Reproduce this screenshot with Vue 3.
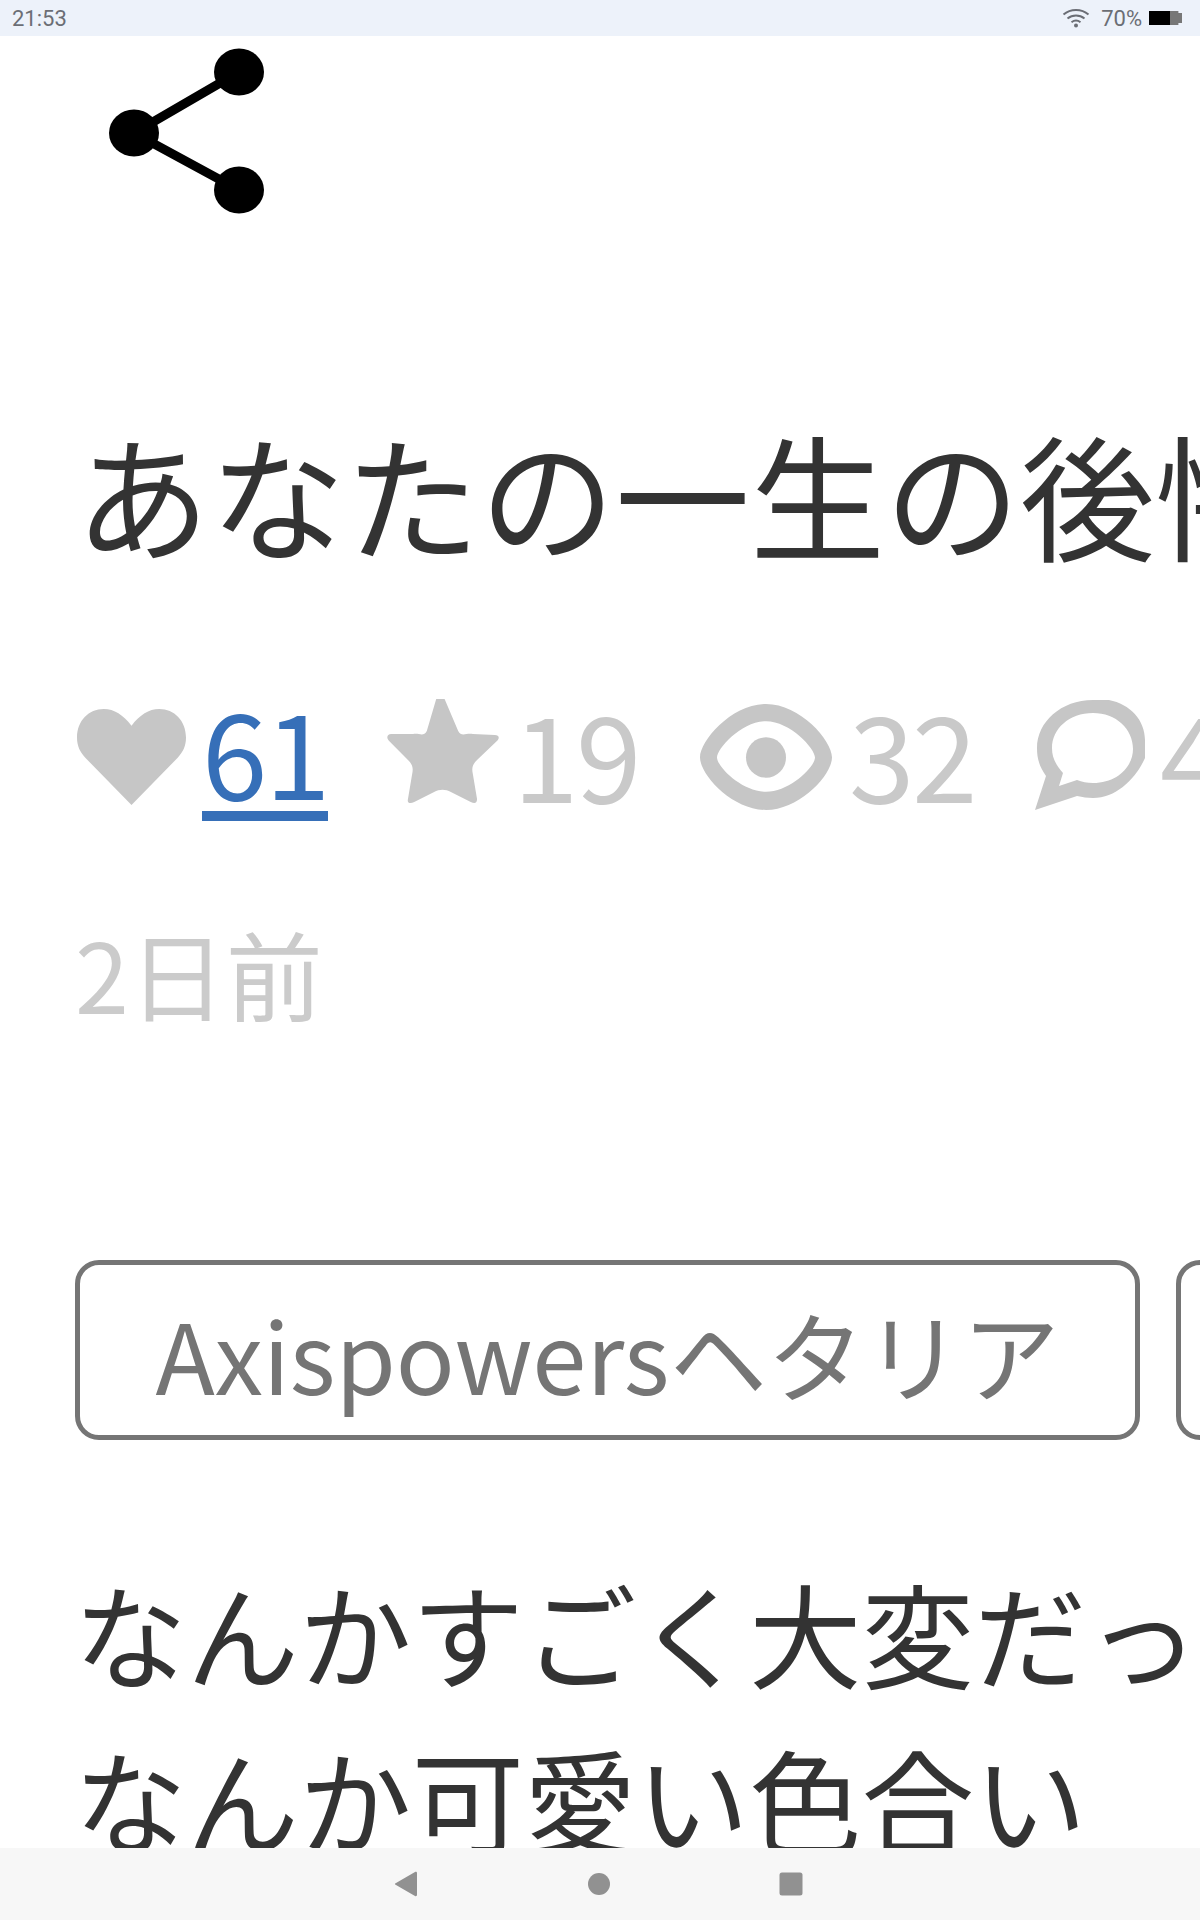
<template>
  <div class="screen">
    <div class="status-bar">
      <span class="clock">21:53</span>
      <div class="status-right">
        <svg class="wifi" width="28" height="20" viewBox="0 0 28 20">
          <path d="M1.5 6.5C8.5 0.5 19.5 0.5 26.5 6.5" />
          <path d="M5.5 10.5C10.5 6.5 17.5 6.5 22.5 10.5" />
          <path d="M9.5 14.2C12.3 12.2 15.7 12.2 18.5 14.2" />
          <circle cx="14" cy="17.5" r="2" />
        </svg>
        <span class="battery-text">70%</span>
        <div class="battery">
          <div class="battery-level"></div>
          <div class="battery-rest"></div>
        </div>
      </div>
    </div>

    <main class="content">
      <div class="share-row">
        <svg class="share-icon" width="170" height="180" viewBox="0 0 170 180">
          <path d="M25 92L130 31M25 92L130 149" fill="none" stroke="#000" stroke-width="9" />
          <ellipse cx="25" cy="92" rx="25" ry="23.5" />
          <ellipse cx="130" cy="31" rx="25" ry="23.5" />
          <ellipse cx="130" cy="149" rx="25" ry="23.5" />
        </svg>
      </div>

      <h1 class="title">あなたの一生の後悔</h1>

      <div class="stats">
        <svg class="stat-icon heart" width="109" height="98" viewBox="0 0 102 100" preserveAspectRatio="none">
          <path d="M51 18C43 7 35 1 25 1C11 1 0 13 0 30C0 39 3 45 8 51L51 99L94 51C99 45 102 39 102 30C102 13 91 1 77 1C67 1 59 7 51 18Z" />
        </svg>
        <a class="stat-link">61</a>
        <svg class="stat-icon star" width="113" height="106" viewBox="0 0 108 106" preserveAspectRatio="none">
          <path d="M48 1H56L69 33C72 39 76 35 83 36L104 37C108 37 109 40 106 43L87 62C82 67 82 71 83 76L87 101C87 105 85 106 81 104L62 94C57 91 51 91 46 94L27 104C23 106 20 105 21 101L25 76C26 71 26 67 21 62L3 43C0 40 1 36 5 36L26 36C32 35 36 39 39 33Z" />
        </svg>
        <span class="stat-num">19</span>
        <svg class="stat-icon eye" width="132" height="107" viewBox="0 0 132 106" preserveAspectRatio="none">
          <path fill-rule="evenodd" d="M66 0C100 0 132 36 132 53C132 70 100 105 66 105C32 105 0 70 0 53C0 36 32 0 66 0ZM66 17C42 17 17 44 17 53C17 62 42 87 66 87C90 87 115 62 115 53C115 44 90 17 66 17Z" />
          <circle cx="66" cy="53" r="20" />
        </svg>
        <span class="stat-num">32</span>
        <svg class="stat-icon bubble" width="110" height="110" viewBox="0 0 110 110">
          <path fill-rule="evenodd" d="M58 0H74C95 4 110 20 110 40V58C101 78 82 98 58 98C52 98 48 97 42 96L0 110L11 76C4 66 2 58 2 48C2 22 26 0 58 0ZM58 13C34 13 17 29 17 48C17 58 21 65 28 73L24 86L42 80C47 82 52 83 58 83C83 83 98 66 98 49C98 29 81 13 58 13Z" />
        </svg>
        <span class="stat-num">4</span>
      </div>

      <div class="date">2日前</div>

      <div class="tags">
        <span class="tag">Axispowersヘタリア</span>
        <span class="tag">APH</span>
      </div>

      <p class="body-text">なんかすごく大変だった<br />なんか可愛い色合い</p>
    </main>

    <nav class="nav-bar">
      <svg width="24" height="26" viewBox="0 0 24 26"><path d="M21 1C22 0.5 23 1 23 2V24C23 25 22 25.500 21 25L2 14C0.500 13.200 0.500 12.800 2 12Z" /></svg>
      <svg width="24" height="24" viewBox="0 0 24 24"><circle cx="12" cy="12" r="11" /></svg>
      <svg width="24" height="24" viewBox="0 0 24 24"><rect width="23" height="23" x="0.500" y="0.500" rx="2.500" /></svg>
    </nav>
  </div>
</template>

<script setup>
</script>

<style>
html,
body {
  margin: 0;
  background: #fff;
}
</style>

<style scoped>
.screen {
  display: flex;
  flex-direction: column;
  width: 1200px;
  height: 1920px;
  overflow: hidden;
  background: #fff;
  font-family: "Noto Sans CJK JP", "Noto Sans", sans-serif;
}

.status-bar {
  flex: none;
  display: flex;
  align-items: center;
  justify-content: space-between;
  height: 36px;
  padding: 0 18px 0 12px;
  background: #edf2fa;
  color: #6b6e75;
  font-family: Roboto, sans-serif;
  font-size: 22px;
}

.status-right {
  display: flex;
  align-items: center;
}

.wifi {
  margin-right: 11px;
  fill: #6b6e75;
}

.wifi path {
  fill: none;
  stroke: #6b6e75;
  stroke-width: 2;
}

.battery {
  display: flex;
  margin-left: 7px;
  height: 14px;
}

.battery-level {
  width: 21px;
  background: #000;
}

.battery-rest {
  width: 12px;
  background: #777;
  clip-path: polygon(0 0, 70% 0, 70% 15%, 100% 15%, 100% 85%, 70% 85%, 70% 100%, 0 100%);
}

.content {
  flex: 1;
  min-height: 0;
  overflow: hidden;
}

.share-row {
  box-sizing: border-box;
  height: 200px;
  padding: 5px 0 0 109px;
}

.share-icon {
  display: block;
  fill: #000;
}

.title {
  margin: 191px 0 0 75px;
  width: 1300px;
  color: #333;
  font-size: 135px;
  font-weight: 400;
  line-height: 130px;
  white-space: nowrap;
}

.stats {
  display: flex;
  align-items: center;
  margin: 145px 0 0 77px;
  height: 110px;
  white-space: nowrap;
  font-size: 118px;
  line-height: 110px;
  font-weight: 400;
  letter-spacing: -2.5px;
}

.stat-icon {
  flex: none;
  fill: #c6c6c6;
}

.stat-link {
  margin-top: 6px;
  margin-left: 16px;
  padding-bottom: 12px;
  border-bottom: 10px solid #366fb8;
  color: #366fb8;
  line-height: 100px;
}

.stat-num {
  margin-bottom: 10px;
  color: #c9c9c9;
}

.star {
  margin-left: 58px;
  margin-bottom: 12px;
}

.stats .star + .stat-num {
  margin-left: 14px;
}

.eye {
  margin-left: 61px;
}

.eye + .stat-num {
  margin-left: 17px;
}

.bubble {
  margin-left: 60px;
  margin-bottom: 4px;
}

.bubble + .stat-num {
  margin-left: 15px;
}

.date {
  margin: 105px 0 0 75px;
  color: #cbcbcb;
  font-size: 97px;
  line-height: 110px;
}

.tags {
  display: flex;
  gap: 36px;
  margin: 233px 0 0 75px;
  white-space: nowrap;
}

.tag {
  flex: none;
  box-sizing: border-box;
  width: 1065px;
  height: 180px;
  border: 5px solid #757575;
  border-radius: 24px;
  color: #757575;
  font-size: 97.5px;
  line-height: 176px;
  text-align: center;
}

.body-text {
  margin: 108px 0 0 74px;
  width: 1300px;
  color: #333;
  font-size: 112.5px;
  line-height: 166px;
  white-space: nowrap;
}

.nav-bar {
  flex: none;
  display: flex;
  align-items: center;
  justify-content: space-between;
  box-sizing: border-box;
  height: 72px;
  padding: 0 397px 0 394px;
  background: #f7f7f7;
  fill: #919191;
}
</style>
